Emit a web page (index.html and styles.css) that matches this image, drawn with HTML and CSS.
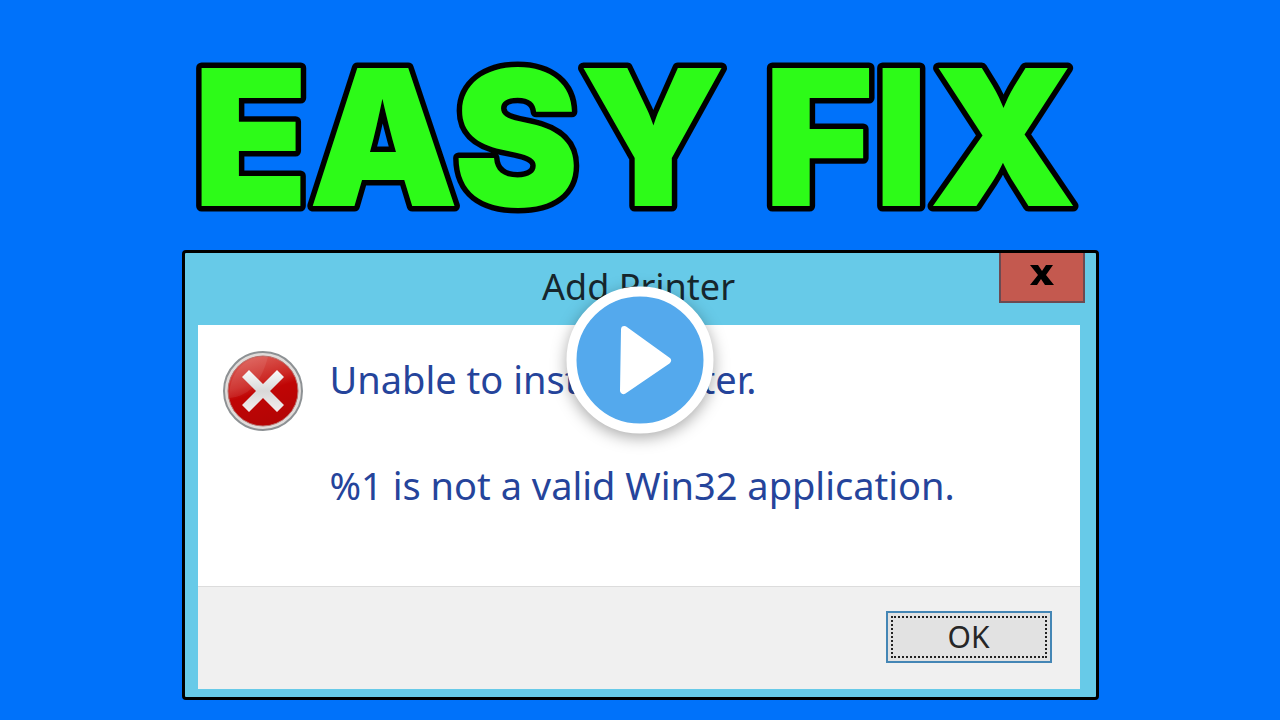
FILE: index.html
```html
<!DOCTYPE html>
<html lang="en">
<head>
    <meta charset="UTF-8">
    <meta name="viewport" content="width=device-width, initial-scale=1.0">
    <title>Easy Fix</title>
    <link rel="stylesheet" href="styles.css">
</head>
<body>
    <h1>
        <svg width="100%" height="200">
            <text x="50%" y="168" text-anchor="middle">EASY FIX</text>
        </svg>
    </h1>
    <div class="dialog" role="dialog" aria-labelledby="dialogTitle">
        <div class="titlebar">
            <h2 id="dialogTitle">Add Printer</h2>
            <button class="close" aria-label="Close">
                <svg width="24" height="20" viewBox="0 0 24 20">
                    <path d="M0 0H8L12 6L16 0H23L16 10L24 20H15L11 14L7 20H0L8 10Z"/>
                </svg>
            </button>
        </div>
        <div class="content">
            <svg class="error-icon" width="82" height="82" viewBox="0 0 82 82">
                <defs>
                    <linearGradient id="red" x1="0" y1="0" x2="0.3" y2="1">
                        <stop offset="0" stop-color="#e06a62"/>
                        <stop offset="0.45" stop-color="#cc2824"/>
                        <stop offset="0.6" stop-color="#c00505"/>
                        <stop offset="1" stop-color="#b50505"/>
                    </linearGradient>
                    <linearGradient id="cross" x1="0" y1="0" x2="0" y2="1">
                        <stop offset="0" stop-color="#fafafa"/>
                        <stop offset="0.5" stop-color="#d8d8d8"/>
                        <stop offset="1" stop-color="#f4eeee"/>
                    </linearGradient>
                </defs>
                <circle cx="41" cy="41" r="39" fill="#e0dcda" stroke="#8d9194" stroke-width="2"/>
                <circle cx="41" cy="41" r="35" fill="url(#red)" stroke="#b8706c" stroke-width="1"/>
                <path d="M7 48C25 46 38 36 46 7C26 4 7 20 7 48Z" fill="#fff" opacity="0.08"/>
                <path d="M27 20L41 34L55 20L62 27L48 41L62 55L55 62L41 48L27 62L20 55L34 41L20 27Z" fill="url(#cross)"/>
            </svg>
            <div class="message">
                <p>Unable to install printer.</p>
                <p>%1 is not a valid Win32 application.</p>
            </div>
        </div>
        <div class="footer">
            <button class="ok"><span>OK</span></button>
        </div>
    </div>
    <button class="play" aria-label="Play">
        <svg width="54" height="72" viewBox="0 0 54 72">
            <path d="M6 5L49 36L5 66Z" fill="#fff" stroke="#fff" stroke-width="7" stroke-linejoin="round"/>
        </svg>
    </button>
</body>
</html>
```
FILE: styles.css
```css
* {
    box-sizing: border-box;
}
body {
    margin: 0;
    min-height: 100vh;
    position: relative;
    padding: 38px 20px 20px;
    background-color: #0072fa;
    font-family: "Noto Sans", sans-serif;
}
h1, h2, p {
    margin: 0;
}
h1 {
    height: 212px;
    padding-right: 10px;
    font-family: Inter, sans-serif;
    font-size: 189px;
    font-weight: 900;
}
h1 svg {
    display: block;
    overflow: visible;
}
h1 text {
    fill: #2dfb18;
    stroke: #000;
    stroke-width: 11px;
    stroke-linejoin: round;
    paint-order: stroke fill;
}
.dialog {
    max-width: 917px;
    margin: 0 auto;
    padding: 0 16px 8px 13px;
    background-color: #67cae8;
    border: 3px solid #000;
    border-radius: 4px;
}
.titlebar {
    display: grid;
    grid-template-columns: 1fr auto 1fr;
    height: 72px;
}
h2 {
    grid-column: 2;
    color: #16262d;
    font-size: 36px;
    font-weight: 400;
    line-height: 68px;
}
button {
    padding: 0;
    cursor: pointer;
}
.close {
    justify-self: end;
    display: flex;
    align-items: center;
    justify-content: center;
    width: 86px;
    height: 50px;
    margin-right: -5px;
    padding-bottom: 4px;
    background-color: #c4594f;
    border: 2px solid #6b4a52;
    border-top: none;
}
.content {
    display: flex;
    gap: 26px;
    min-height: 261px;
    padding: 25px 24px;
    background-color: #fff;
}
.error-icon {
    flex: none;
}
.message {
    padding-top: 3px;
    color: #25449b;
    font-size: 38px;
    line-height: 53px;
}
.message p + p {
    margin-top: 53px;
}
.footer {
    display: flex;
    justify-content: flex-end;
    padding: 24px 28px 26px;
    background-color: #f0f0f0;
    border-top: 1px solid #dcdcdc;
}
.ok {
    width: 166px;
    height: 52px;
    padding: 3px;
    background-color: #e2e2e2;
    border: 2px solid #4486b5;
    color: #262626;
    font-family: inherit;
    font-size: 30px;
    line-height: 38px;
}
.ok span {
    display: block;
    border: 2px dotted #222;
}
.play {
    position: absolute;
    top: 50%;
    left: 50%;
    transform: translate(-50%, -50%);
    display: flex;
    align-items: center;
    justify-content: center;
    width: 147px;
    height: 147px;
    padding-left: 10px;
    background-color: #54a9ed;
    border: 10px solid #fff;
    border-radius: 50%;
    box-shadow: 0 4px 16px rgba(0, 0, 0, 0.35);
}
```
